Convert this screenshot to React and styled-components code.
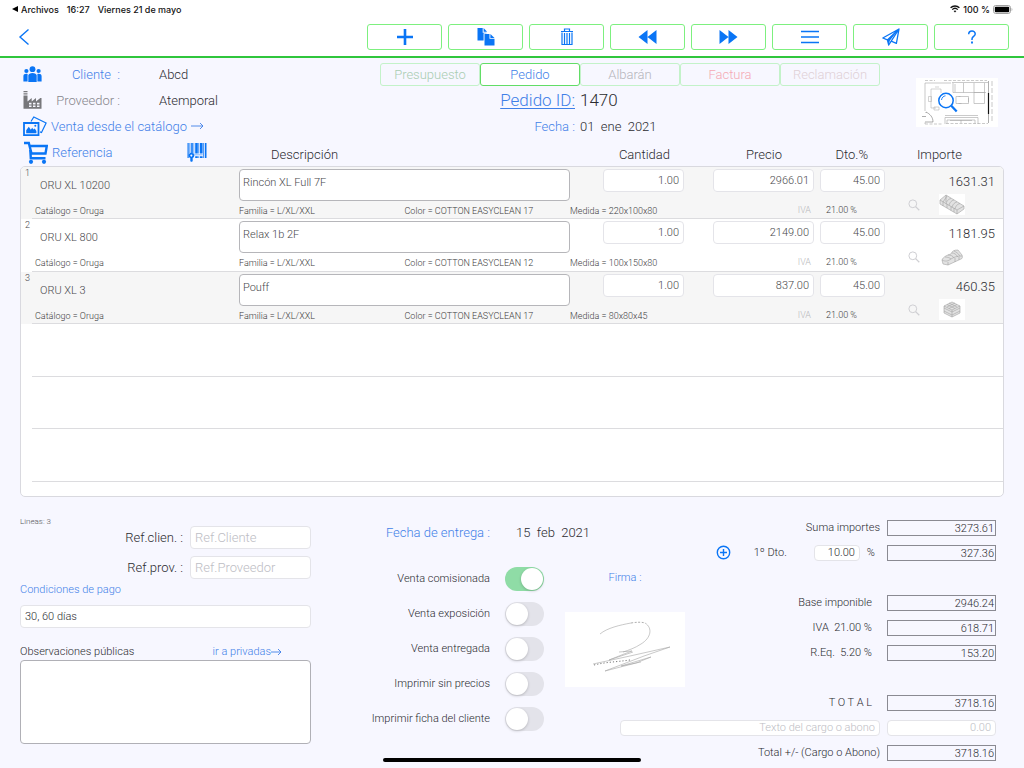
import React, { useState } from "react";
import styled, { createGlobalStyle } from "styled-components";

const BLUE = "#0a75f5";
const LINK = "#3f7fe8";

const GlobalStyle = createGlobalStyle`
* {
	box-sizing: border-box;
}
body {
	margin: 0;
	background-color: #f7f7ff;
	color: #2b2b30;
	font-family: Roboto, "Liberation Sans", sans-serif;
	font-weight: 300;
	font-size: 13px;
}
button, input, textarea {
	font: inherit;
	color: inherit;
}
a {
	color: ${LINK};
	text-decoration: none;
}
svg {
	display: block;
	flex: none;
}
`;

const Page = styled.div`
	min-height: 100vh;
	display: flex;
	flex-direction: column;
`;

const Top = styled.header`
	background-color: white;
	border-bottom: 2px solid #2fc63c;
`;

const StatusBar = styled.div`
	height: 18px;
	padding: 0 11px 0 12px;
	display: flex;
	align-items: center;
	justify-content: space-between;
	font-family: Inter, sans-serif;
	font-size: 9px;
	font-weight: 500;
	color: #111;
`;

const StatusGroup = styled.div`
	display: flex;
	align-items: center;
	gap: ${(props) => props.$gap}px;
`;

const Toolbar = styled.nav`
	height: 38px;
	padding: 0 15px 0 18px;
	display: flex;
	align-items: center;
	gap: 6px;
`;

const BackButton = styled.button`
	margin-right: auto;
	padding: 0;
	border: none;
	background: none;
	cursor: pointer;
`;

const ToolButton = styled.button`
	width: 75px;
	height: 26px;
	padding: 0;
	display: flex;
	align-items: center;
	justify-content: center;
	border: 1px solid #7df07f;
	border-radius: 3px;
	background-color: white;
	color: ${BLUE};
	cursor: pointer;
`;

const Head = styled.section`
	padding: 3px 26px 0 20px;
	display: grid;
	grid-template-columns: 360fr 500fr 118fr;
`;

const Party = styled.div`
	display: grid;
	grid-template-columns: 28px 72px 1fr;
	grid-auto-rows: 26px;
	align-items: center;
	padding-left: 3px;
`;

const PartyLabel = styled.span`
	padding-right: 3px;
	text-align: right;
	white-space: pre;
	color: ${(props) => (props.$muted ? "#86868c" : LINK)};
`;

const PartyValue = styled.span`
	padding-left: 36px;
`;

const CatalogLink = styled.a`
	grid-column: 2 / 4;
	display: flex;
	align-items: center;
	gap: 4px;
`;

const Doc = styled.div`
	display: flex;
	flex-direction: column;
`;

const Tabs = styled.div`
	height: 26px;
	display: flex;
	align-items: center;
`;

const Tab = styled.button`
	flex: 1;
	height: 23px;
	padding: 0;
	border: 1px solid ${(props) => (props.$active ? "#62dd66" : "#c3f2c9")};
	border-radius: 3px;
	background-color: ${(props) => (props.$active ? "white" : "transparent")};
	color: ${(props) => props.$color};
	cursor: pointer;
`;

const DocLine = styled.div`
	height: 26px;
	display: grid;
	grid-template-columns: 195fr 300fr;
	column-gap: 5px;
	align-items: center;
	white-space: pre;
	font-size: ${(props) => (props.$big ? 17 : 13)}px;
`;

const DocLabel = styled.a`
	text-align: right;
	text-decoration: ${(props) => (props.$underline ? "underline" : "none")};
	text-underline-offset: 2px;
	text-decoration-thickness: 1px;
`;

const PlanButton = styled.button`
	align-self: start;
	justify-self: end;
	margin-top: 17px;
	padding: 0;
	border: none;
	background-color: white;
	cursor: pointer;
`;

const Lines = styled.table`
	display: block;
	margin: 0 20px;
`;

const lineColumns = `
	display: grid;
	grid-template-columns: 218fr 331fr 114px 130px 71px 118px;
`;

const LinesHead = styled.thead`
	display: block;
`;

const HeadRow = styled.tr`
	${lineColumns}
	height: 27px;
	padding: 0 1px;
	align-items: center;
`;

const HeadCell = styled.th`
	padding: ${(props) => props.$pad};
	font-weight: 300;
	text-align: ${(props) => props.$align || "right"};
`;

const RefCell = styled(HeadCell)`
	display: flex;
	align-items: center;
	justify-content: space-between;
`;

const RefLink = styled.a`
	display: flex;
	align-items: center;
	gap: 4px;
`;

const LinesBody = styled.tbody`
	display: block;
	height: 331px;
	overflow: hidden;
	border: 1px solid #d9d9df;
	border-radius: 5px;
	background-color: white;
`;

const LineRow = styled.tr`
	${lineColumns}
	height: 52px;
	background: linear-gradient(#dcdcdf, #dcdcdf) 11px 100% / 100% 1px no-repeat
		${(props) => (props.$shaded ? "#f6f6f6" : "white")};
	color: #48484c;

	&:nth-child(even) {
		height: 53px;
	}
`;

const Cell = styled.td`
	height: 52px;
	padding: 2px 0 0;
	display: flex;
	flex-direction: column;
	align-items: ${(props) => props.$align || "flex-end"};
	font-size: 11px;
`;

const LineNumber = styled.span`
	padding-left: 4px;
	font-size: 9px;
	line-height: 9px;
`;

const LineRef = styled.span`
	padding-left: 19px;
	line-height: 16px;
`;

const Detail = styled.span`
	margin-top: auto;
	padding: ${(props) => props.$pad || "0 0 2px"};
	width: 100%;
	display: grid;
	grid-auto-flow: column;
	grid-auto-columns: 1fr;
	font-size: 9px;
	line-height: 11px;
	white-space: nowrap;
	text-align: ${(props) => props.$align || "left"};
	color: ${(props) => (props.$faint ? "#b9b9bd" : "#3c3c40")};
`;

const Description = styled.textarea`
	width: 100%;
	height: 32px;
	padding: 6px 3px;
	border: 1px solid #b6b6ba;
	border-radius: 4px;
	background-color: white;
	line-height: 14px;
	resize: none;
`;

const Field = styled.input`
	width: ${(props) => props.$width || "100%"};
	height: ${(props) => props.$height || 23}px;
	padding: 0 4px;
	border: 1px solid #e4e4e9;
	border-radius: 4px;
	background-color: white;
	font-size: ${(props) => props.$size || 11}px;
	text-align: ${(props) => props.$align || "left"};

	&::placeholder {
		color: #bdbdc4;
		opacity: 1;
	}
`;

const Amount = styled.span`
	padding-right: 8px;
	font-size: 13px;
	line-height: 25px;
	color: #2b2b30;
`;

const LineTools = styled.div`
	padding-right: 38px;
	display: flex;
	align-items: center;
	gap: 19px;
`;

const IconButton = styled.button`
	padding: 0;
	border: none;
	background: none;
	cursor: pointer;
`;

const Foot = styled.section`
	margin-top: 18px;
	padding: 0 28px 0 20px;
	display: grid;
	grid-template-columns: 291fr 254fr 431fr;
`;

const Notes = styled.div`
	padding-top: 3px;
	display: flex;
	flex-direction: column;
`;

const LineCount = styled.span`
	font-size: 8px;
	line-height: 8px;
	color: #55555a;
`;

const FieldRow = styled.div`
	margin-bottom: 7px;
	display: flex;
	align-items: center;
	justify-content: flex-end;
	gap: 7px;
	white-space: pre;
`;

const Terms = styled.label`
	margin: -4px 0 4px;
	display: flex;
	flex-direction: column;
	gap: 7px;
	font-size: 11px;
	line-height: 16px;
	color: ${LINK};

	input {
		color: #2b2b30;
	}
`;

const NotesHead = styled.div`
	margin-top: 12px;
	padding-right: 29px;
	display: flex;
	justify-content: space-between;
	font-size: 11px;
	line-height: 16px;
`;

const ArrowLink = styled.a`
	display: flex;
	align-items: center;
`;

const NotesBox = styled.textarea`
	height: 84px;
	border: 1px solid #b0b0b6;
	border-radius: 4px;
	background-color: white;
	resize: none;
`;

const Options = styled.div`
	padding: 8px 21px 0 0;
	display: flex;
	flex-direction: column;
	font-size: 11px;
`;

const OptionRow = styled.div`
	height: 35px;
	display: grid;
	grid-template-columns: 1fr 39px;
	column-gap: 15px;
	align-items: center;
	text-align: right;
	white-space: pre;
`;

const DeliveryRow = styled(OptionRow)`
	height: 18px;
	margin-bottom: 20px;
	column-gap: 26px;
	grid-template-columns: 1fr 28px;
	font-size: 13px;

	time {
		text-align: left;
	}
`;

const Switch = styled.input`
	appearance: none;
	width: 39px;
	height: 24px;
	margin: 0;
	padding: 1px;
	display: flex;
	border-radius: 12px;
	background-color: #e3e3ea;
	cursor: pointer;

	&::before {
		content: "";
		width: 22px;
		height: 22px;
		border-radius: 50%;
		background-color: white;
		box-shadow: 0 1px 3px rgba(0, 0, 0, 0.2);
	}
	&:checked {
		justify-content: flex-end;
		background-color: #8fdca6;
	}
`;

const Totals = styled.div`
	display: grid;
	grid-template-columns: 120px 1fr;
	grid-auto-rows: 25px;
	font-size: 11px;
`;

const TotalRow = styled.div`
	grid-column: ${(props) => (props.$wide ? "1 / 3" : "2")};
	grid-row: ${(props) => props.$row};
	display: flex;
	align-items: center;
	justify-content: flex-end;
	gap: 7px;
	white-space: pre;
`;

const TotalLabel = styled.span`
	padding-right: ${(props) => (props.$inset ? 8 : 0)}px;
`;

const TotalBox = styled.output`
	width: 109px;
	height: 16px;
	padding-right: 1px;
	border: 1px solid #8a8a92;
	line-height: 15px;
	text-align: right;
`;

const DiscountLabel = styled.label`
	padding: 0 20px 0 16px;
`;

const DiscountUnit = styled.span`
	padding-right: 5px;
`;

const Signature = styled.div`
	grid-column: 1;
	grid-row: 3 / 8;
	display: flex;
	flex-direction: column;
	gap: 22px;
	font-size: 11px;
	line-height: 25px;
	text-align: center;
`;

const SignaturePad = styled.div`
	background-color: white;
`;

const HomeBar = styled.div`
	position: fixed;
	bottom: 6px;
	left: 50%;
	width: 258px;
	height: 4px;
	margin-left: -129px;
	border-radius: 2px;
	background-color: black;
`;

const PlusIcon = () => (
  <svg width="18" height="18" viewBox="0 0 18 18" fill="currentColor">
    <path d="M7.7 1h2.6v6.7H17v2.6h-6.7V17H7.7v-6.7H1V7.7h6.7z" />
  </svg>
);

const CopyIcon = () => (
  <svg width="20" height="20" viewBox="0 0 20 20" fill="currentColor">
    <path d="M1.5 1h5.2v4.700h3.800v.6H7.600v7.200H1.500z" />
    <path d="M7.600 1l3.500 3.700H7.600z" />
    <path d="M8.500 7h5v4.700h5V18.500h-10z" />
    <path d="M14.400 7l4.100 3.900h-4.100z" />
  </svg>
);

const TrashIcon = () => (
  <svg width="14" height="18" viewBox="0 0 14 18" fill="none" stroke="currentColor">
    <path d="M1 3.500h12M4.500 3V1h5v2" strokeWidth="1.200" />
    <path d="M2 4.500v12h10v-12M4.500 5v11M7 5v11M9.500 5v11" strokeWidth="1.200" />
  </svg>
);

const RewindIcon = () => (
  <svg width="19" height="16" viewBox="0 0 19 16" fill="currentColor">
    <path d="M9.500 1v14L.5 8zM18.500 1v14l-9-7z" />
  </svg>
);

const ForwardIcon = () => (
  <svg width="19" height="16" viewBox="0 0 19 16" fill="currentColor">
    <path d="M.5 1v14l9-7zM9.500 1v14l9-7z" />
  </svg>
);

const MenuIcon = () => (
  <svg width="20" height="16" viewBox="0 0 20 16" stroke="currentColor" strokeWidth="1.600">
    <path d="M1 2.500h18M1 8h18M1 13.500h18" />
  </svg>
);

const SendIcon = () => (
  <svg width="20" height="20" viewBox="0 0 20 20">
    <path
      d="M18 2L1.800 11l4.600 1.900L18 2l-2.600 14.300-5.200-2.100L18 2M6.400 12.900L7.700 18l2.500-3.800"
      fill="none"
      stroke="currentColor"
      strokeWidth="1.300"
      strokeLinejoin="round"
    />
    <path d="M18 2L6.400 12.900 7.700 18l1.200-4.500z" fill="currentColor" />
  </svg>
);

const HelpIcon = () => (
  <svg width="12" height="16" viewBox="0 0 12 16" fill="none" stroke="currentColor" strokeWidth="1.500">
    <path d="M2.700 5.300C2.700 1 9.300 1 9.200 4.900 9.100 7.300 6 7.600 6 10v1" />
    <path d="M6 12.600v1.900" strokeWidth="1.900" />
  </svg>
);

const PeopleIcon = () => (
  <svg width="19" height="17" viewBox="0 0 19 17" fill={BLUE}>
    <circle cx="9.500" cy="3.200" r="2.900" />
    <circle cx="3.400" cy="5" r="2.100" />
    <circle cx="15.600" cy="5" r="2.100" />
    <path d="M5.300 16V9.500c0-3.400 8.400-3.400 8.400 0V16z" />
    <path d="M.4 15.500v-5.200C.4 8 2.500 7.500 4.600 8v7.500zM18.600 15.500v-5.200c0-2.300-2.100-2.800-4.200-2.300v7.500z" />
  </svg>
);

const FactoryIcon = () => (
  <svg width="19" height="18" viewBox="0 0 19 18" fill="#77777b">
    <path d="M.5 0h4v1.200h-4zM.5 2.300h4v1.200h-4z" />
    <path
      fillRule="evenodd"
      d="M.5 4.500h4v6L8.700 7v3.500L13 7v3.500L17.300 7h1.200v10.800H.5zM6 11.800v1.600h2.500v-1.600zM10 11.800v1.600h2.500v-1.600zM14 11.800v1.600h2.500v-1.600zM6 14.500V16h2.500v-1.500zM10 14.500V16h2.500v-1.500zM14 14.500V16h2.500v-1.500z"
    />
  </svg>
);

const PhotosIcon = () => (
  <svg width="24" height="20" viewBox="0 0 24 20" fill="none" stroke={BLUE}>
    <path d="M8 5.500L10.800 1l12.300 6-4.600 9.500-1.500-.6" strokeWidth="1.200" />
    <path d="M1 7h14.500v12.200H1z" strokeWidth="1.800" />
    <path d="M3.200 17.300v-3l2.600-3.500 2 3 1.400-2 1.200 1.700 1.300-1 1.700 2.500v2.300z" fill={BLUE} stroke="none" />
    <circle cx="12.300" cy="9.800" r="1" fill={BLUE} stroke="none" />
  </svg>
);

const CartIcon = () => (
  <svg width="24" height="23" viewBox="0 0 24 23" fill="none" stroke={BLUE} strokeWidth="2.400">
    <path d="M0 2h4.800l2.700 10.500h14L22.800 5H5.500" />
    <path d="M6.300 9l.5 8.300h14.700" strokeWidth="2.400" />
    <circle cx="7" cy="20.800" r="2.100" fill={BLUE} stroke="none" />
    <circle cx="20" cy="20.800" r="2.100" fill={BLUE} stroke="none" />
  </svg>
);

const BarcodeIcon = () => (
  <svg width="20" height="21" viewBox="0 0 20 21" fill={BLUE}>
    <path d="M.5 1h1.200v15H.5zM2.500 1h.8v10h-.8zM4.200 1h1.600v10H4.200zM6.600 1h.6v11h-.6zM8.200 1h2.600v10.500H8.200zM11.400 1h.8v10.500h-.8zM13 1h2.600v10.500H13zM16.300 1h.8v15h-.8zM17.900 1h1.600v15h-1.600z" />
    <path d="M8.200 14.200h2.600V16H8.200zM11.400 14.200h.8V16h-.8zM13 14.200h2.600V16H13z" />
    <path d="M5.800 12.800h10" stroke={BLUE} strokeWidth="0.800" opacity="0.600" />
    <path
      fillRule="evenodd"
      d="M4.300 10.800c3.500 0 4 4.200 1.400 5.200v2.700c0 1.300-2.400 1.300-2.400 0V16c-2.600-1-2.300-5.200 1-5.200zM4.300 12.500a1 1 0 1 0 .1 0z"
    />
  </svg>
);

const Arrow = ({ width = 13 }) => (
  <svg width={width} height="8" viewBox={`0 0 ${width} 8`} fill="none" stroke={LINK}>
    <path d={`M0 4h${width - 1}M${width - 4} 1l3 3-3 3`} strokeWidth="0.900" />
  </svg>
);

const SearchIcon = () => (
  <svg width="12" height="12" viewBox="0 0 12 12" fill="none" stroke="#cfcfd3">
    <circle cx="4.800" cy="4.800" r="3.900" strokeWidth="1" />
    <path d="M7.600 7.600L11.300 11.300" strokeWidth="1.300" />
  </svg>
);

const AddIcon = () => (
  <svg width="15" height="15" viewBox="0 0 15 15" fill="none" stroke={BLUE} strokeWidth="1.400">
    <circle cx="7.500" cy="7.500" r="6.200" />
    <path d="M7.500 4v7M4 7.500h7" />
  </svg>
);

const PlanDrawing = () => (
  <svg width="82" height="49" viewBox="0 0 82 49" fill="none" stroke="#a6a6a6" strokeWidth="0.600">
    <path d="M9 5v28M9 44.500v1.500M9 5h26M36 4.500h36" />
    <path d="M9 2.500h10M28 2.500h43M30 45.500h42M9 46h18" strokeDasharray="3 1.500" />
    <path d="M72.500 3v42" stroke="#777" />
    <path d="M76 3v42" strokeDasharray="5 2" />
    <path d="M37 5v9.500h33M39 6v8M47.500 5v9.500M58 5v20.500h10.500V5M58 14.500h10.500" />
    <path d="M15 11h10v4M15 11v19h5M19 9h4M12.500 18.500h3v5h-3zM18 29h5v3h-5z" stroke="#b5b5b5" />
    <path d="M40 18.500h12.500v7H40zM42.500 18.500h2M42.500 25.500h3M52.500 20v4" />
    <path d="M29 46v-6.500h33V46M31 45.500v-3.500h28v3.500M34 42.500h22M45 42v3M29 37.500h33" />
    <path d="M10 34c4 2 7 5 7 10M10 34v1M6 38.500h4M9 44h8" stroke="#777" />
    <path d="M72.500 15v21" stroke="#111" strokeWidth="1.200" />
    <circle cx="30" cy="22.500" r="7.200" fill="#fff" fillOpacity="0.500" stroke={BLUE} strokeWidth="1.500" />
    <path d="M25.500 22c.3-2.500 2-4 4-4.200" stroke={BLUE} strokeWidth="0.900" />
    <path d="M35.300 27.800l5.400 5.700" stroke={BLUE} strokeWidth="2.200" />
  </svg>
);

const Thumb = styled.svg`
	background-color: white;
	fill: #e2e2e2;
	stroke: #a2a2a2;
	stroke-width: 0.6px;
`;

const thumbs = {
  corner: (
    <Thumb width="26" height="21" viewBox="0 0 26 21">
      <path d="M1 6l6-5 18 11v3l-7 5L1 10z" />
      <path
        d="M1 6l17 10 7-4M18 16v4M4 8l4-6M7 10c1-4 3-5 5-5.500M10 11.500c1-4 3-5 5-5.500M13 13.500c1-4 3-5 5-5.500M16 15c1-4 3-5 5-5.500M4 8v4M8 10v4M12 12.500v4M15 14v4M7 1v7"
        fill="none"
      />
    </Thumb>
  ),
  relax: (
    <Thumb width="26" height="21" viewBox="0 0 26 21">
      <path d="M3 14c1-3 5-5 9-6 1-3 3-4 7-4l4 5c1 2 0 4-1 4l-13 6-5-1z" />
      <path
        d="M3 14c4 2 6 1 9-1s6-3 11-3M9 16v3M6 11c3 0 5 1 6 2M9 9c3 0 5 1 6 3M13 7c2 0 4 1 6 4M15 5c2 1 4 2 6 5M16 12v4M20 11v3"
        fill="none"
      />
    </Thumb>
  ),
  pouf: (
    <Thumb width="26" height="21" viewBox="0 0 26 21">
      <path d="M5 7l8-4 8 4v7l-8 4-8-4z" />
      <path
        d="M5 7l8 4 8-4M13 11v7M5 9l8 4 8-4M5 12l8 4 8-4M8 5.500l8 4M10 4l8 4M10 9.500l8-4M8 8l8-4"
        fill="none"
      />
    </Thumb>
  ),
};

const tools = [
  { name: "Nuevo", Icon: PlusIcon },
  { name: "Duplicar", Icon: CopyIcon },
  { name: "Borrar", Icon: TrashIcon },
  { name: "Anterior", Icon: RewindIcon },
  { name: "Siguiente", Icon: ForwardIcon },
  { name: "Lista", Icon: MenuIcon },
  { name: "Enviar", Icon: SendIcon },
  { name: "Ayuda", Icon: HelpIcon },
];

const tabs = [
  { name: "Presupuesto", color: "#a9cdb2" },
  { name: "Pedido", color: LINK },
  { name: "Albarán", color: "#b4b4ba" },
  { name: "Factura", color: "#f5a9b4" },
  { name: "Reclamación", color: "#dfd0d6" },
];

const lines = [
  {
    ref: "ORU XL 10200",
    description: "Rincón XL Full 7F",
    color: "COTTON EASYCLEAN 17",
    size: "220x100x80",
    price: "2966.01",
    total: "1631.31",
    thumb: "corner",
  },
  {
    ref: "ORU XL 800",
    description: "Relax 1b 2F",
    color: "COTTON EASYCLEAN 12",
    size: "100x150x80",
    price: "2149.00",
    total: "1181.95",
    thumb: "relax",
  },
  {
    ref: "ORU XL 3",
    description: "Pouff",
    color: "COTTON EASYCLEAN 17",
    size: "80x80x45",
    price: "837.00",
    total: "460.35",
    thumb: "pouf",
  },
];

const options = [
  { id: "comisionada", label: "Venta comisionada", on: true },
  { id: "exposicion", label: "Venta exposición" },
  { id: "entregada", label: "Venta entregada" },
  { id: "sinprecios", label: "Imprimir sin precios" },
  { id: "ficha", label: "Imprimir ficha del cliente" },
];

const OrderLine = ({ line, number }) => (
  <LineRow $shaded={number % 2 === 1}>
    <Cell $align="flex-start">
      <LineNumber>{number}</LineNumber>
      <LineRef>{line.ref}</LineRef>
      <Detail $pad="0 0 2px 14px">Catálogo = Oruga</Detail>
    </Cell>
    <Cell>
      <Description aria-label="Descripción" defaultValue={line.description} />
      <Detail>
        <span>Familia = L/XL/XXL</span>
        <span>Color = {line.color}</span>
      </Detail>
    </Cell>
    <Cell>
      <Field aria-label="Cantidad" $width="81px" $align="right" defaultValue="1.00" />
      <Detail>Medida = {line.size}</Detail>
    </Cell>
    <Cell>
      <Field aria-label="Precio" $width="101px" $align="right" defaultValue={line.price} />
      <Detail $pad="0 3px 3px" $align="right" $faint>
        IVA
      </Detail>
    </Cell>
    <Cell>
      <Field aria-label="Dto.%" $width="65px" $align="right" defaultValue="45.00" />
      <Detail $pad="0 0 3px 12px">21.00 %</Detail>
    </Cell>
    <Cell>
      <Amount>{line.total}</Amount>
      <LineTools>
        <IconButton aria-label="Buscar">
          <SearchIcon />
        </IconButton>
        {thumbs[line.thumb]}
      </LineTools>
    </Cell>
  </LineRow>
);

const App = () => {
  const [tab, setTab] = useState("Pedido");

  return (
    <Page>
      <GlobalStyle />
      <Top>
        <StatusBar>
          <StatusGroup $gap={8}>
            <StatusGroup $gap={3}>
              <svg width="6" height="6" viewBox="0 0 6 6">
                <path d="M6 0v6L0 3z" />
              </svg>
              <span>Archivos</span>
            </StatusGroup>
            <span>16:27</span>
            <span>Viernes 21 de mayo</span>
          </StatusGroup>
          <StatusGroup $gap={3}>
            <svg width="10" height="8" viewBox="0 0 10 8" fill="none" stroke="#111" strokeWidth="1.300">
              <path d="M.6 2.800c2.500-2.400 6.300-2.400 8.800 0M2.200 4.600c1.600-1.500 4-1.500 5.600 0" />
              <path d="M3.600 6.100c.8-.8 2-.8 2.800 0L5 7.600z" fill="#111" stroke="none" />
            </svg>
            <span>100 %</span>
            <svg width="20" height="9" viewBox="0 0 20 9">
              <rect x="0.500" y="0.500" width="17" height="8" rx="2.200" fill="none" stroke="#a0a0a0" />
              <rect x="1.800" y="1.800" width="14.400" height="5.400" rx="1" />
              <path d="M18.600 3v3c1-.4 1-2.600 0-3z" fill="#a0a0a0" />
            </svg>
          </StatusGroup>
        </StatusBar>
        <Toolbar>
          <BackButton aria-label="Volver">
            <svg width="12" height="18" viewBox="0 0 12 18" fill="none" stroke={BLUE} strokeWidth="1.400">
              <path d="M10.500 1.500L2 9l8.500 7.500" />
            </svg>
          </BackButton>
          {tools.map(({ name, Icon }) => (
            <ToolButton key={name} aria-label={name}>
              <Icon />
            </ToolButton>
          ))}
        </Toolbar>
      </Top>

      <Head>
        <Party>
          <PeopleIcon />
          <PartyLabel>{"Cliente  :"}</PartyLabel>
          <PartyValue>Abcd</PartyValue>
          <FactoryIcon />
          <PartyLabel $muted>Proveedor :</PartyLabel>
          <PartyValue>Atemporal</PartyValue>
          <PhotosIcon />
          <CatalogLink href="#catalogo">
            Venta desde el catálogo <Arrow />
          </CatalogLink>
        </Party>
        <Doc>
          <Tabs>
            {tabs.map(({ name, color }) => (
              <Tab key={name} $color={color} $active={name === tab} onClick={() => setTab(name)}>
                {name}
              </Tab>
            ))}
          </Tabs>
          <DocLine $big>
            <DocLabel href="#pedido" $underline>
              Pedido ID:
            </DocLabel>
            <span>1470</span>
          </DocLine>
          <DocLine>
            <DocLabel href="#fecha">Fecha :</DocLabel>
            <time dateTime="2021-01-01">{"01  ene  2021"}</time>
          </DocLine>
        </Doc>
        <PlanButton aria-label="Plano">
          <PlanDrawing />
        </PlanButton>
      </Head>

      <Lines>
        <LinesHead>
          <HeadRow>
            <RefCell $pad="0 32px 0 3px">
              <RefLink href="#referencia">
                <CartIcon /> Referencia
              </RefLink>
              <BarcodeIcon />
            </RefCell>
            <HeadCell $align="left" $pad="4px 0 0 32px">
              Descripción
            </HeadCell>
            <HeadCell $pad="4px 14px 0 0">Cantidad</HeadCell>
            <HeadCell $pad="4px 32px 0 0">Precio</HeadCell>
            <HeadCell $pad="4px 17px 0 0">Dto.%</HeadCell>
            <HeadCell $pad="4px 41px 0 0">Importe</HeadCell>
          </HeadRow>
        </LinesHead>
        <LinesBody>
          {lines.map((line, i) => (
            <OrderLine key={line.ref} line={line} number={i + 1} />
          ))}
          <LineRow />
          <LineRow />
          <LineRow />
        </LinesBody>
      </Lines>

      <Foot>
        <Notes>
          <LineCount>Lineas: 3</LineCount>
          <FieldRow>
            <label htmlFor="refcliente">Ref.clien. :</label>
            <Field id="refcliente" $width="121px" $size={13} placeholder="Ref.Cliente" />
          </FieldRow>
          <FieldRow>
            <label htmlFor="refproveedor">Ref.prov. :</label>
            <Field id="refproveedor" $width="121px" $size={13} placeholder="Ref.Proveedor" />
          </FieldRow>
          <Terms>
            Condiciones de pago
            <Field defaultValue="30, 60 días" />
          </Terms>
          <NotesHead>
            <label htmlFor="observaciones">Observaciones públicas</label>
            <ArrowLink href="#privadas">
              ir a privadas
              <Arrow width={11} />
            </ArrowLink>
          </NotesHead>
          <NotesBox id="observaciones" />
        </Notes>

        <Options>
          <DeliveryRow>
            <a href="#entrega">Fecha de entrega :</a>
            <time dateTime="2021-02-15">{"15  feb  2021"}</time>
          </DeliveryRow>
          {options.map(({ id, label, on }) => (
            <OptionRow key={id}>
              <label htmlFor={id}>{label}</label>
              <Switch id={id} type="checkbox" defaultChecked={on} />
            </OptionRow>
          ))}
        </Options>

        <Totals>
          <TotalRow $row={1}>
            <TotalLabel>Suma importes</TotalLabel>
            <TotalBox>3273.61</TotalBox>
          </TotalRow>
          <TotalRow $row={2}>
            <IconButton aria-label="Añadir descuento">
              <AddIcon />
            </IconButton>
            <DiscountLabel htmlFor="dto">1º Dto.</DiscountLabel>
            <Field id="dto" $width="46px" $height={16} $align="right" defaultValue="10.00" />
            <DiscountUnit>%</DiscountUnit>
            <TotalBox>327.36</TotalBox>
          </TotalRow>
          <Signature>
            <a href="#firma">Firma :</a>
            <SignaturePad>
              <svg width="120" height="75" viewBox="0 0 120 75" fill="none" stroke="#a5a5a5" strokeWidth="0.600">
                <path d="M35 22c7-6 20-9 31-11" />
                <path d="M66 11c6-1 11-1 14 0" strokeDasharray="2 1.500" stroke="#777" />
                <path d="M80 11c8 5 6 15-4 21-6 4-12 6-18 8M54 40l13-1-8 3-15 6 24-8" />
                <path d="M29 53c12-3 22-3 36-5" strokeDasharray="1.200 2" stroke="#555" strokeWidth="0.800" />
                <path d="M28 52l37-8 40-9-26 9-39 15 31-8 15-6-30 9 20-4" />
              </svg>
            </SignaturePad>
          </Signature>
          <TotalRow $row={4}>
            <TotalLabel $inset>Base imponible</TotalLabel>
            <TotalBox>2946.24</TotalBox>
          </TotalRow>
          <TotalRow $row={5}>
            <TotalLabel $inset>{"IVA  21.00 %"}</TotalLabel>
            <TotalBox>618.71</TotalBox>
          </TotalRow>
          <TotalRow $row={6}>
            <TotalLabel $inset>{"R.Eq.  5.20 %"}</TotalLabel>
            <TotalBox>153.20</TotalBox>
          </TotalRow>
          <TotalRow $row={8}>
            <TotalLabel $inset>T O T A L</TotalLabel>
            <TotalBox>3718.16</TotalBox>
          </TotalRow>
          <TotalRow $row={9} $wide>
            <Field
              aria-label="Texto del cargo o abono"
              $width="260px"
              $height={16}
              $align="right"
              placeholder="Texto del cargo o abono"
            />
            <Field aria-label="Cargo o abono" $width="109px" $height={16} $align="right" placeholder="0.00" />
          </TotalRow>
          <TotalRow $row={10}>
            <TotalLabel>Total +/- (Cargo o Abono)</TotalLabel>
            <TotalBox>3718.16</TotalBox>
          </TotalRow>
        </Totals>
      </Foot>
      <HomeBar />
    </Page>
  );
};

export default App;
